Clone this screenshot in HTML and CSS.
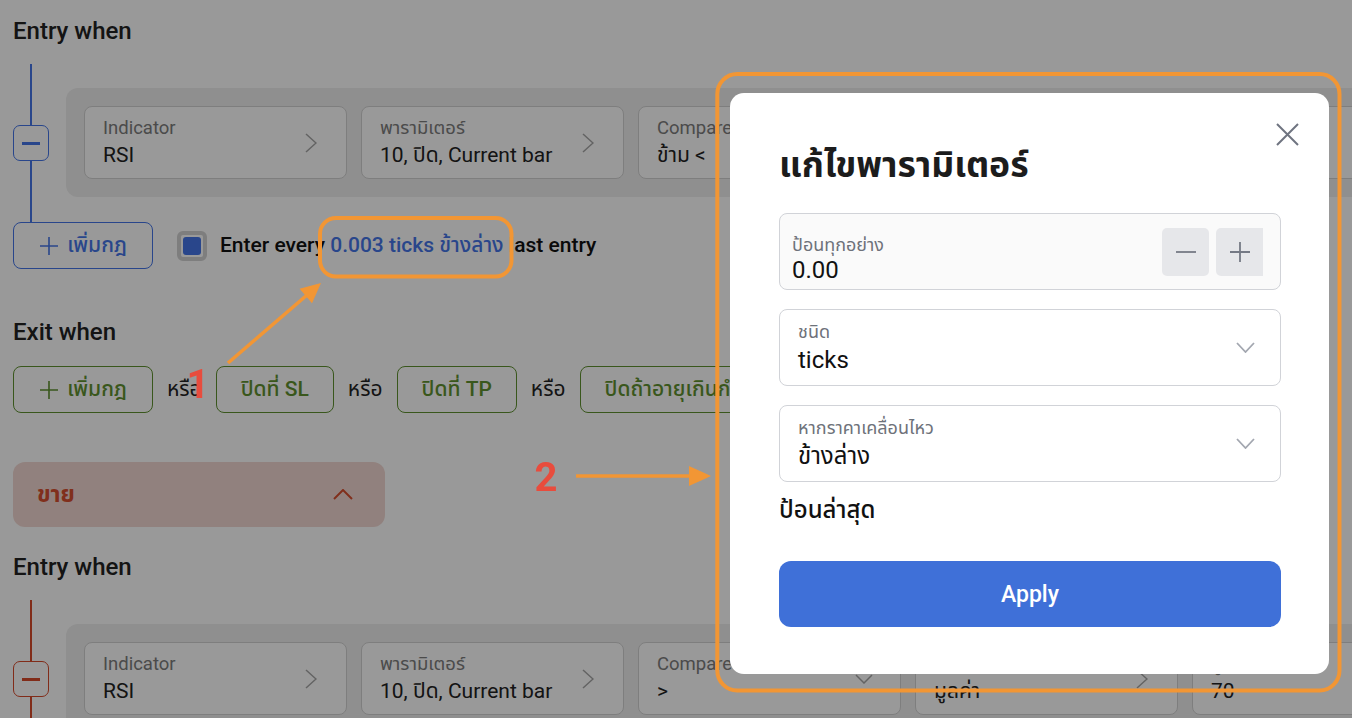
FILE: index.html
```html
<!DOCTYPE html>
<html lang="th">
<head>
<meta charset="utf-8">
<title>แก้ไขพารามิเตอร์</title>
<link rel="stylesheet" href="styles.css">
</head>
<body>
<main class="page">
  <section class="side buy">
    <h2 class="heading">Entry when</h2>
    <div class="rule-row">
      <div class="rail"><span class="seg"></span><button class="minus"><span></span></button><span class="seg"></span></div>
      <div class="cond">
        <div class="field"><div class="ftext"><span class="flabel">Indicator</span><span class="fvalue">RSI</span></div><svg class="chev-r" width="12" height="20" viewBox="0 0 12 20"><path d="M1 1l10 9-10 9"/></svg></div>
        <div class="field"><div class="ftext"><span class="flabel">พารามิเตอร์</span><span class="fvalue">10, ปิด, Current bar</span></div><svg class="chev-r" width="12" height="20" viewBox="0 0 12 20"><path d="M1 1l10 9-10 9"/></svg></div>
        <div class="field"><div class="ftext"><span class="flabel">Compare</span><span class="fvalue">ข้าม &lt;</span></div><svg class="chev-d" width="18" height="10" viewBox="0 0 18 10"><path d="M1 1l8 8 8-8"/></svg></div>
        <div class="field"><div class="ftext"><span class="flabel">ประเภท</span><span class="fvalue">มูลค่า</span></div><svg class="chev-r" width="12" height="20" viewBox="0 0 12 20"><path d="M1 1l10 9-10 9"/></svg></div>
        <div class="field"><div class="ftext"><span class="flabel">มูลค่า</span><span class="fvalue">30</span></div></div>
      </div>
    </div>
    <div class="add-row">
      <button class="add-btn"><svg width="20" height="20" viewBox="0 0 20 20"><path d="M10 1v18M1 10h18"/></svg>เพิ่มกฎ</button>
      <span class="checkbox"><span class="check-fill"></span></span>
      <span class="entry-text">Enter every <span class="link">0.003 ticks ข้างล่าง</span> last entry</span>
    </div>
    <h2 class="heading exit-heading">Exit when</h2>
    <div class="exit-row">
      <button class="exit-btn add"><svg width="20" height="20" viewBox="0 0 20 20"><path d="M10 1v18M1 10h18"/></svg>เพิ่มกฎ</button>
      <span class="or">หรือ</span>
      <button class="exit-btn">ปิดที่ SL</button>
      <span class="or">หรือ</span>
      <button class="exit-btn">ปิดที่ TP</button>
      <span class="or">หรือ</span>
      <button class="exit-btn">ปิดถ้าอายุเกินกำหนด</button>
    </div>
  </section>

  <div class="sell-header"><span class="sell-title">ขาย</span><svg width="20" height="11" viewBox="0 0 20 11"><path d="M1 10l9-9 9 9"/></svg></div>

  <section class="side sell">
    <h2 class="heading sell-heading">Entry when</h2>
    <div class="rule-row">
      <div class="rail"><span class="seg"></span><button class="minus"><span></span></button><span class="seg"></span></div>
      <div class="cond">
        <div class="field"><div class="ftext"><span class="flabel">Indicator</span><span class="fvalue">RSI</span></div><svg class="chev-r" width="12" height="20" viewBox="0 0 12 20"><path d="M1 1l10 9-10 9"/></svg></div>
        <div class="field"><div class="ftext"><span class="flabel">พารามิเตอร์</span><span class="fvalue">10, ปิด, Current bar</span></div><svg class="chev-r" width="12" height="20" viewBox="0 0 12 20"><path d="M1 1l10 9-10 9"/></svg></div>
        <div class="field"><div class="ftext"><span class="flabel">Compare</span><span class="fvalue">&gt;</span></div><svg class="chev-d" width="18" height="10" viewBox="0 0 18 10"><path d="M1 1l8 8 8-8"/></svg></div>
        <div class="field"><div class="ftext"><span class="flabel">ประเภท</span><span class="fvalue">มูลค่า</span></div><svg class="chev-r" width="12" height="20" viewBox="0 0 12 20"><path d="M1 1l10 9-10 9"/></svg></div>
        <div class="field"><div class="ftext"><span class="flabel">มูลค่า</span><span class="fvalue">70</span></div></div>
      </div>
    </div>
  </section>
</main>

<div class="backdrop"></div>

<div class="modal" role="dialog">
  <button class="close" aria-label="close"><svg width="23" height="23" viewBox="0 0 23 23"><path d="M1 1l21 21M22 1L1 22"/></svg></button>
  <h1 class="modal-title">แก้ไขพารามิเตอร์</h1>
  <div class="mfield stepper">
    <div class="mtext"><span class="mlabel">ป้อนทุกอย่าง</span><span class="mvalue">0.00</span></div>
    <div class="steps">
      <button class="step"><svg width="22" height="22" viewBox="0 0 22 22"><path d="M1 11h20"/></svg></button>
      <button class="step last"><svg width="22" height="22" viewBox="0 0 22 22"><path d="M1 11h20M11 1v20"/></svg></button>
    </div>
  </div>
  <div class="mfield select">
    <div class="mtext"><span class="mlabel">ชนิด</span><span class="mvalue">ticks</span></div>
    <svg class="mchev" width="19" height="11" viewBox="0 0 19 11"><path d="M1 1l8.5 9 8.5-9"/></svg>
  </div>
  <div class="mfield select">
    <div class="mtext"><span class="mlabel">หากราคาเคลื่อนไหว</span><span class="mvalue">ข้างล่าง</span></div>
    <svg class="mchev" width="19" height="11" viewBox="0 0 19 11"><path d="M1 1l8.5 9 8.5-9"/></svg>
  </div>
  <p class="last-entry">ป้อนล่าสุด</p>
  <button class="apply">Apply</button>
</div>

<svg class="annot" width="1352" height="718" viewBox="0 0 1352 718">
  <rect class="ring" x="320" y="218" width="191.5" height="58.5" rx="16"/>
  <rect class="ring" x="717.3" y="74" width="622.2" height="616.5" rx="20"/>
  <line class="arrow" x1="228" y1="363" x2="307" y2="295"/>
  <polygon class="head" points="321,283 312,303.2 299.6,288.8"/>
  <line class="arrow" x1="576" y1="476" x2="692" y2="476"/>
  <polygon class="head" points="689,466 711,476 689,486"/>
  <text class="num" x="198" y="398" text-anchor="middle">1</text>
  <text class="num" x="546" y="491" text-anchor="middle">2</text>
</svg>
</body>
</html>
```

FILE: styles.css
```css
* { box-sizing: border-box; }

html, body {
  margin: 0;
  width: 1352px;
  height: 718px;
  overflow: hidden;
  background: #ffffff;
}

body {
  font-family: Roboto, "Noto Sans Thai", "Noto Sans", "DejaVu Sans", sans-serif;
  color: #222222;
}

button {
  font-family: inherit;
  padding: 0;
  margin: 0;
  cursor: pointer;
}

.page {
  padding: 17px 13px 0;
}

.buy { --accent: #4576e8; }
.sell { --accent: #d84a2b; }

.heading {
  margin: 0;
  font-size: 24px;
  line-height: 28px;
  font-weight: 500;
  color: #222222;
}

.exit-heading { margin-top: 49px; }
.sell-heading { margin-top: 26px; }

.rule-row {
  display: flex;
  margin-top: 19px;
}

.rail {
  flex: none;
  width: 36px;
  display: flex;
  flex-direction: column;
  align-items: center;
}

.seg {
  flex: 1;
  width: 2px;
  background: var(--accent);
}

.minus {
  flex: none;
  width: 36px;
  height: 36px;
  border: 1px solid var(--accent);
  border-radius: 7px;
  background: #ffffff;
  display: flex;
  align-items: center;
  justify-content: center;
}

.minus span {
  width: 18px;
  height: 3px;
  background: var(--accent);
}

.cond {
  flex: none;
  margin: 24px 0 25px 17px;
  display: flex;
  gap: 14px;
  padding: 18px;
  background: #eeeeee;
  border-radius: 12px;
}

.field {
  flex: 0 0 263px;
  height: 73px;
  border: 1px solid #d3d3d3;
  border-radius: 8px;
  background: #ffffff;
  padding: 0 18px;
  display: flex;
  align-items: center;
}

.ftext {
  flex: 1;
  display: flex;
  flex-direction: column;
  gap: 4px;
  white-space: nowrap;
  overflow: hidden;
}

.flabel {
  font-size: 18.5px;
  line-height: 20px;
  color: #7d7d7d;
}

.fvalue {
  font-size: 21px;
  line-height: 26px;
  color: #222222;
}

.chev-r, .chev-d {
  flex: none;
  fill: none;
  stroke: #a6a6a6;
  stroke-width: 1.5;
}

.chev-r { margin-right: 11px; }
.chev-d { margin-right: 9px; }

.add-row {
  display: flex;
  align-items: center;
  height: 47px;
}

.add-btn {
  width: 140px;
  height: 47px;
  border: 1px solid var(--accent);
  border-radius: 8px;
  background: #ffffff;
  color: var(--accent);
  font-size: 21px;
  font-weight: 500;
  display: flex;
  align-items: center;
  justify-content: center;
  gap: 8px;
}

.add-btn svg, .exit-btn svg {
  fill: none;
  stroke: currentColor;
  stroke-width: 1.6;
}

.checkbox {
  margin-left: 24px;
  width: 30px;
  height: 30px;
  border: 4px solid #d2d2d2;
  border-radius: 6px;
  padding: 2px;
  display: flex;
}

.check-fill {
  flex: 1;
  background: var(--accent);
  border-radius: 3px;
}

.entry-text {
  margin-left: 13px;
  font-size: 21px;
  font-weight: 500;
  color: #111111;
  white-space: nowrap;
}

.link { color: var(--accent); }

.exit-row {
  display: flex;
  align-items: center;
  gap: 14px;
  margin-top: 20px;
  white-space: nowrap;
}

.exit-btn {
  flex: none;
  height: 47px;
  border: 1px solid #5f9130;
  border-radius: 8px;
  background: #ffffff;
  color: #5f9130;
  font-size: 21px;
  font-weight: 500;
  padding: 0 24px;
  display: flex;
  align-items: center;
  gap: 8px;
}

.exit-btn.add {
  width: 140px;
  justify-content: center;
  padding: 0;
}

.or {
  font-size: 21px;
  color: #222222;
}

.sell-header {
  margin-top: 49px;
  width: 372px;
  height: 65px;
  border-radius: 12px;
  background: #f2d8d2;
  display: flex;
  align-items: center;
  justify-content: space-between;
  padding: 0 32px 0 24px;
}

.sell-title {
  font-size: 23px;
  font-weight: 700;
  color: #d64f30;
}

.sell-header svg {
  fill: none;
  stroke: #d64f30;
  stroke-width: 2;
}

.backdrop {
  position: fixed;
  inset: 0;
  background: rgba(0, 0, 0, 0.4);
}

.modal {
  position: fixed;
  top: 93px;
  left: 730px;
  width: 599px;
  height: 581px;
  background: #ffffff;
  border-radius: 14px;
  padding: 50px 48px 0 49px;
  display: flex;
  flex-direction: column;
}

.close {
  position: absolute;
  top: 30px;
  right: 30px;
  width: 23px;
  height: 23px;
  border: 0;
  background: transparent;
  display: flex;
}

.close svg {
  fill: none;
  stroke: #6f7480;
  stroke-width: 2;
}

.modal-title {
  margin: 0;
  font-size: 35.5px;
  line-height: 44px;
  font-weight: 700;
  color: #1c1c1c;
}

.mfield {
  flex: none;
  height: 77px;
  border: 1px solid #d1d3d8;
  border-radius: 8px;
  background: #ffffff;
  display: flex;
  align-items: center;
  margin-top: 19px;
}

.mtext {
  flex: 1;
  display: flex;
  flex-direction: column;
  gap: 4px;
  white-space: nowrap;
}

.mlabel {
  font-size: 18px;
  line-height: 20px;
  color: #6e727a;
}

.mvalue {
  font-size: 24px;
  line-height: 28px;
  color: #111111;
}

.stepper {
  margin-top: 26px;
  background: #fafafa;
  align-items: flex-start;
  padding: 0 17px 0 12px;
}

.stepper .mtext {
  padding-top: 21px;
  gap: 1px;
}

.steps {
  display: flex;
  gap: 7px;
  margin-top: 14px;
}

.step {
  width: 47px;
  height: 48px;
  border: 0;
  border-radius: 5px;
  background: #e6e7ea;
  display: flex;
  align-items: center;
  justify-content: center;
}

.step.last { border-radius: 5px 0 0 5px; }

.step svg {
  fill: none;
  stroke: #757a85;
  stroke-width: 1.8;
}

.select {
  padding: 0 25px 0 18px;
}

.mchev {
  flex: none;
  fill: none;
  stroke: #a3a7b0;
  stroke-width: 1.8;
}

.last-entry {
  margin: 14px 0 0;
  font-size: 24px;
  line-height: 28px;
  font-weight: 500;
  color: #111111;
}

.apply {
  margin-top: 37px;
  height: 66px;
  border: 0;
  border-radius: 12px;
  background: #3f70d8;
  color: #ffffff;
  font-size: 23px;
  font-weight: 500;
}

.annot {
  position: fixed;
  left: 0;
  top: 0;
  pointer-events: none;
}

.ring {
  fill: none;
  stroke: #f29634;
  stroke-width: 4;
}

.arrow {
  stroke: #f29634;
  stroke-width: 3.5;
}

.head { fill: #f29634; }

.num {
  font-family: Roboto, "Liberation Sans", sans-serif;
  font-size: 40px;
  font-weight: 700;
  fill: #e84c3d;
}
```
